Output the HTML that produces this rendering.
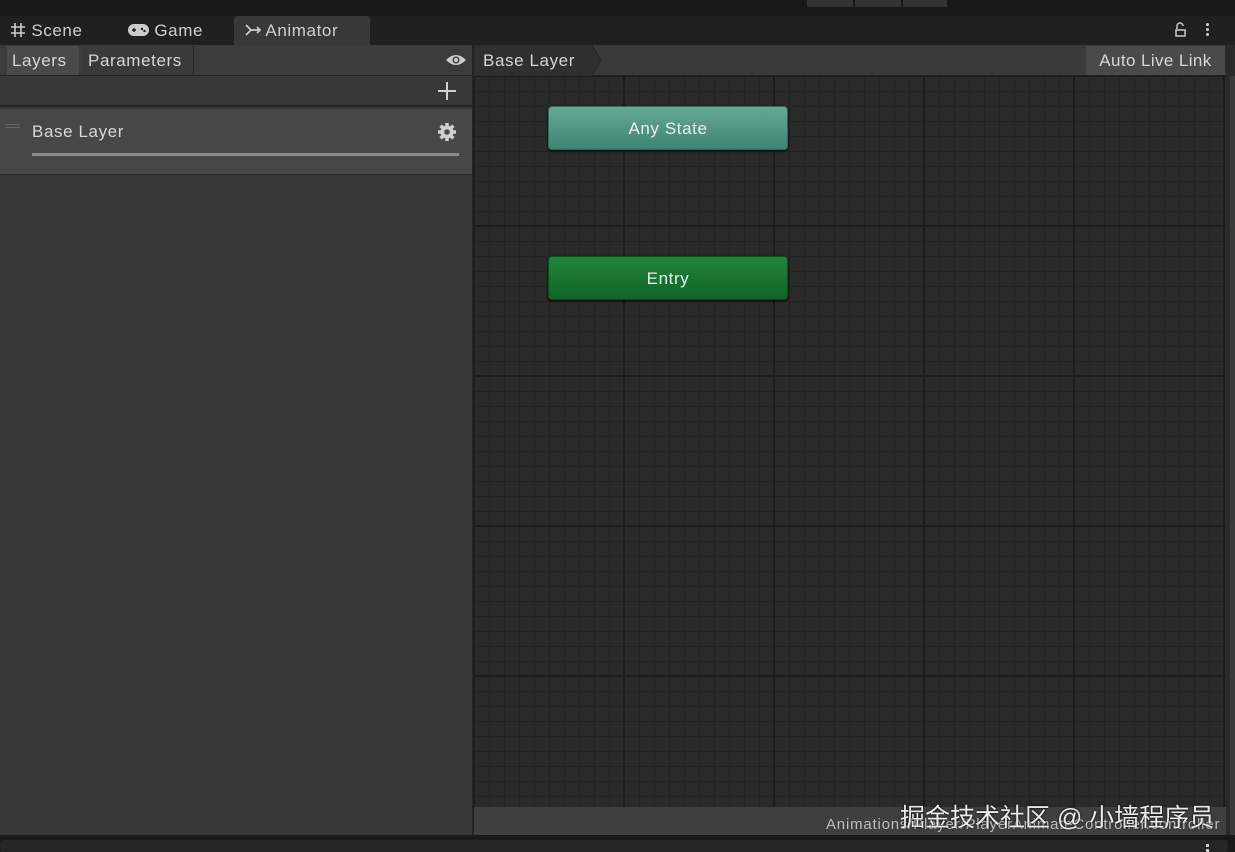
<!DOCTYPE html>
<html><head><meta charset="utf-8"><style>
*{margin:0;padding:0;box-sizing:border-box}
body{width:1235px;height:852px;background:#191919;position:relative;overflow:hidden;font-family:"Liberation Sans","DejaVu Sans",sans-serif;color:#d2d2d2;font-size:17px;letter-spacing:0.6px}
.abs{position:absolute}
.tab{position:absolute;top:16px;height:28px;line-height:30px;font-size:17px;color:#cfcfcf}
.grid{position:absolute;left:474px;top:76px;width:752px;height:731px;background-color:#2a2a2a;
background-image:
linear-gradient(to right,#1c1c1c 0 2px,transparent 2px),
linear-gradient(to bottom,#1c1c1c 0 2px,transparent 2px),
linear-gradient(to right,#232323 0 1px,transparent 1px),
linear-gradient(to bottom,#232323 0 1px,transparent 1px);
background-size:150px 150px,150px 150px,15px 15px,15px 15px;
background-position:149px 0,0 149px,0 0,0 0}
.node{position:absolute;left:548px;width:240px;height:44px;border-radius:4px;text-align:center;line-height:43px;color:#e8efe9;font-size:17px;box-shadow:0 1px 2px #000}
</style></head><body>
<div class="abs" style="left:0;top:0;width:1235px;height:16px;background:#191919"></div>
<div class="abs" style="left:807px;top:0;width:46px;height:7px;background:#333"></div>
<div class="abs" style="left:855px;top:0;width:46px;height:7px;background:#333"></div>
<div class="abs" style="left:903px;top:0;width:44px;height:7px;background:#333"></div>
<div class="abs" style="left:0;top:16px;width:1235px;height:29px;background:#202020"></div>
<div class="abs" style="left:234px;top:16px;width:136px;height:29px;background:#383838;border-radius:3px 3px 0 0"></div>
<div class="tab" style="left:10px">
<svg width="16" height="16" viewBox="0 0 16 16" style="vertical-align:-2px"><path d="M5 1v14M11 1v14M1 5h14M1 11h14" stroke="#ccc" stroke-width="1.6"/></svg> Scene</div>
<div class="tab" style="left:128px"><svg width="21" height="14" viewBox="0 0 21 14" style="vertical-align:-1px"><rect x="0" y="1" width="21" height="12" rx="6" fill="#ccc"/><path d="M4 7h4M6 5v4" stroke="#202020" stroke-width="1.5"/><circle cx="14" cy="6" r="1.2" fill="#202020"/><circle cx="16.5" cy="8" r="1.2" fill="#202020"/></svg> Game</div>
<div class="tab" style="left:245px"><svg width="16" height="14" viewBox="0 0 16 14" style="vertical-align:-1px"><path d="M1 2l5 5h9M1 12l5-5M12 4l3 3-3 3" stroke="#ccc" stroke-width="1.7" fill="none"/></svg> Animator</div>
<svg class="abs" style="left:1174px;top:22px" width="14" height="16" viewBox="0 0 14 16"><path d="M3 7V4a3 3 0 0 1 6 0M2 8h9v6H2z" stroke="#ccc" stroke-width="1.5" fill="none"/></svg>
<div class="abs" style="left:1206px;top:23px;width:3px;height:3px;background:#ccc;box-shadow:0 5px #ccc,0 10px #ccc;border-radius:2px"></div>
<div class="abs" style="left:0;top:45px;width:473px;height:790px;background:#383838"></div>
<div class="abs" style="left:0;top:45px;width:473px;height:31px;background:#3c3c3c;border-bottom:1px solid #232323"></div>
<div class="abs" style="left:7px;top:46px;width:72px;height:29px;background:#4a4a4a;line-height:29px;padding-left:5px;color:#d6d6d6">Layers</div>
<div class="abs" style="left:82px;top:46px;width:112px;height:29px;background:#3a3a3a;border-right:1px solid #272727;line-height:29px;padding-left:6px;color:#d6d6d6">Parameters</div>
<svg class="abs" style="left:445px;top:53px" width="22" height="14" viewBox="0 0 22 14"><path d="M1 7Q11-3 21 7Q11 17 1 7z" fill="#ccc"/><circle cx="11" cy="7" r="3.5" fill="#3c3c3c"/><circle cx="11" cy="7" r="2" fill="#ccc"/></svg>
<div class="abs" style="left:0;top:77px;width:473px;height:30px;background:#383838;border-bottom:2px solid #262626"></div>
<div class="abs" style="left:438px;top:90px;width:18px;height:2px;background:#d0d0d0"></div>
<div class="abs" style="left:446px;top:82px;width:2px;height:18px;background:#d0d0d0"></div>
<div class="abs" style="left:0;top:109px;width:473px;height:66px;background:#474747;border-bottom:1px solid #262626"></div>
<div class="abs" style="left:5px;top:124px;width:15px;height:1px;background:#666;box-shadow:0 3px #666"></div>
<div class="abs" style="left:32px;top:122px;font-size:17px;color:#d8d8d8">Base Layer</div>
<div class="abs" style="left:32px;top:153px;width:427px;height:3px;background:#8a8a8a"></div>
<svg class="abs" style="left:437px;top:122px" width="20" height="20" viewBox="0 0 20 20"><g fill="#cfcfcf"><circle cx="10" cy="10" r="6.5"/><g stroke="#cfcfcf" stroke-width="3.5"><path d="M10 1v18M1 10h18M3.6 3.6l12.8 12.8M16.4 3.6L3.6 16.4"/></g></g><circle cx="10" cy="10" r="2.8" fill="#474747"/></svg>
<div class="abs" style="left:472px;top:45px;width:2px;height:790px;background:#232323"></div>
<div class="abs" style="left:474px;top:45px;width:761px;height:31px;background:#3a3a3a;border-bottom:1px solid #1e1e1e"></div>
<svg class="abs" style="left:474px;top:45px" width="136" height="31"><path d="M0 0H118L127 15.5L118 31H0z" fill="#2f2f2f" stroke="#262626"/></svg>
<div class="abs" style="left:483px;top:51px;color:#d6d6d6">Base Layer</div>
<div class="abs" style="left:1086px;top:46px;width:139px;height:29px;background:#4a4a4a;line-height:29px;text-align:center;color:#d6d6d6;letter-spacing:0.4px">Auto Live Link</div>
<div class="abs" style="left:1225px;top:45px;width:10px;height:790px;background:#2a2a2a"></div>
<div class="abs" style="left:1230px;top:76px;width:5px;height:760px;background:#3b3b3b"></div>
<div class="grid"></div>
<div class="node" style="top:106px;background:linear-gradient(#65a896,#3f8573);border:1px solid #2f6b5c">Any State</div>
<div class="node" style="top:256px;background:linear-gradient(#23843e,#0f6526);border:1px solid #0a4e1c">Entry</div>
<div class="abs" style="left:474px;top:807px;width:752px;height:28px;background:#3f3f3f"></div>
<div class="abs" style="left:826px;top:816px;font-size:15px;color:#bdbdbd;letter-spacing:0.8px;white-space:nowrap">Animations/Player/PlayerAnimateController.controller</div>
<div class="abs" style="left:900px;top:798px;font-size:25px;letter-spacing:0;color:#e9e9e9;font-family:'Liberation Sans','Noto Sans CJK SC',sans-serif;text-shadow:0 0 2px #000;white-space:nowrap">掘金技术社区 @ 小墙程序员</div>
<div class="abs" style="left:0;top:835px;width:1235px;height:17px;background:#191919"></div>
<div class="abs" style="left:0;top:840px;width:1228px;height:12px;background:#262626;border-radius:3px"></div>
<div class="abs" style="left:1206px;top:844px;width:3px;height:3px;background:#ccc;box-shadow:0 5px #ccc"></div>
</body></html>
